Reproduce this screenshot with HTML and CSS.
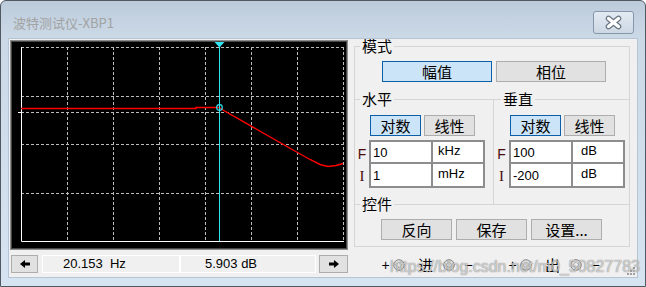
FILE: index.html
```html
<!DOCTYPE html>
<html>
<head>
<meta charset="utf-8">
<link rel="stylesheet" href="styles.css">
</head>
<body>
<div class="window">
  <div class="titlebar">
    <span class="title">波特测试仪-XBP1</span>
    <button class="close">
      <svg width="17" height="15" viewBox="0 0 17 15">
        <path d="M3.5 3.5L13.5 11.5M13.5 3.5L3.5 11.5" stroke="#66717f" stroke-width="5.6" stroke-linecap="round" fill="none"/>
        <path d="M3.5 3.5L13.5 11.5M13.5 3.5L3.5 11.5" stroke="#ffffff" stroke-width="3.4" stroke-linecap="round" fill="none"/>
      </svg>
    </button>
  </div>
  <div class="client">
    <div class="left">
      <div class="screen">
        <svg width="336" height="208" viewBox="11 41 336 208">
          <g stroke="#bcbcbc" stroke-width="1" stroke-dasharray="3 2" fill="none">
            <path d="M67.5 47V241M113.5 47V241M159.5 47V241M205.5 47V241M251.5 47V241M297.5 47V241M343.5 47V241"/>
            <path d="M21 47.5H343M21 96.5H343M21 112.5H343M21 144.5H343M21 193.5H343"/>
          </g>
          <path d="M21.5 47V241.5H344" stroke="#ffffff" stroke-width="1" fill="none"/>
          <path d="M18 112.5H21" stroke="#ffffff" stroke-width="1"/>
          <polyline points="21,108.5 196,108.5 196,107.5 219,107.5 222,109.5 293,150 310,159.5 320,164.5 328,166.5 336,165.5 343,163.5" stroke="#ff0000" stroke-width="1.4" fill="none"/>
          <path d="M219.5 42V241" stroke="#2ee4f0" stroke-width="1"/>
          <polygon points="214.5,42 224.5,42 219.5,47.5" fill="#2ee4f0"/>
          <circle cx="219.5" cy="107.5" r="2.8" stroke="#2ee4f0" stroke-width="1.2" fill="none"/>
        </svg>
      </div>
      <div class="readout">
        <button class="arrow first">
          <svg width="10" height="8" viewBox="0 0 10 8"><polygon points="0,4 5,0 5,2.5 10,2.5 10,5.5 5,5.5 5,8" fill="#000"/></svg>
        </button>
        <div class="rfield f1">20.153&nbsp; Hz</div>
        <div class="rfield f2">5.903 dB</div>
        <button class="arrow last">
          <svg width="10" height="8" viewBox="0 0 10 8"><polygon points="10,4 5,0 5,2.5 0,2.5 0,5.5 5,5.5 5,8" fill="#000"/></svg>
        </button>
      </div>
    </div>
    <div class="right">
      <fieldset class="grp outer">
        <legend>模式</legend>
        <div class="mode-row">
          <button class="btn wide sel">幅值</button>
          <button class="btn wide">相位</button>
        </div>
        <div class="axes">
          <fieldset class="grp sub h">
            <legend>水平</legend>
            <div class="toggle">
              <button class="btn small sel">对数</button>
              <button class="btn small">线性</button>
            </div>
            <div class="params">
              <div class="lbls"><span class="lbl f">F</span><span class="lbl i">I</span></div>
              <div class="cells">
                <span class="val">10</span><span class="unit">kHz</span>
                <span class="val">1</span><span class="unit">mHz</span>
              </div>
            </div>
          </fieldset>
          <fieldset class="grp sub v">
            <legend>垂直</legend>
            <div class="toggle">
              <button class="btn small sel">对数</button>
              <button class="btn small">线性</button>
            </div>
            <div class="params">
              <div class="lbls"><span class="lbl f">F</span><span class="lbl i">I</span></div>
              <div class="cells">
                <span class="val">100</span><span class="unit db">dB</span>
                <span class="val">-200</span><span class="unit db">dB</span>
              </div>
            </div>
          </fieldset>
        </div>
        <fieldset class="grp sub ctl">
          <legend>控件</legend>
          <div class="ctl-row">
            <button class="btn ctlbtn">反向</button>
            <button class="btn ctlbtn">保存</button>
            <button class="btn ctlbtn">设置...</button>
          </div>
        </fieldset>
      </fieldset>
      <div class="terms">
        <div class="term">
          <span class="pm">+</span>
          <svg class="jack a" width="12" height="12" viewBox="0 0 12 12"><circle cx="6" cy="6" r="5.3" fill="#dcdcdc" stroke="#8a8a8a"/><circle cx="6" cy="6" r="2.4" fill="#f6f6f6" stroke="#a8a8a8" stroke-width="0.8"/></svg>
          <span class="tl">进</span>
          <svg class="jack b" width="12" height="12" viewBox="0 0 12 12"><circle cx="6" cy="6" r="5.3" fill="#dcdcdc" stroke="#8a8a8a"/><circle cx="6" cy="6" r="2.4" fill="#f6f6f6" stroke="#a8a8a8" stroke-width="0.8"/></svg>
          <span class="pm end">−</span>
        </div>
        <div class="term second">
          <span class="pm">+</span>
          <svg class="jack a" width="12" height="12" viewBox="0 0 12 12"><circle cx="6" cy="6" r="5.3" fill="#dcdcdc" stroke="#8a8a8a"/><circle cx="6" cy="6" r="2.4" fill="#f6f6f6" stroke="#a8a8a8" stroke-width="0.8"/></svg>
          <span class="tl">出</span>
          <svg class="jack b" width="12" height="12" viewBox="0 0 12 12"><circle cx="6" cy="6" r="5.3" fill="#dcdcdc" stroke="#8a8a8a"/><circle cx="6" cy="6" r="2.4" fill="#f6f6f6" stroke="#a8a8a8" stroke-width="0.8"/></svg>
          <span class="pm end">−</span>
        </div>
      </div>
    </div>
    <svg class="grip" width="10" height="10" viewBox="0 0 10 10">
      <g fill="#a0a0a0"><rect x="7" y="1" width="2" height="2"/><rect x="4" y="4" width="2" height="2"/><rect x="7" y="4" width="2" height="2"/><rect x="1" y="7" width="2" height="2"/><rect x="4" y="7" width="2" height="2"/><rect x="7" y="7" width="2" height="2"/></g>
    </svg>
  </div>
</div>
<div class="watermark">https://blog.csdn.net/m0_50827783</div>
</body>
</html>
```

FILE: styles.css
```css
* { box-sizing: border-box; }
html, body { margin: 0; padding: 0; }
body {
  width: 646px;
  height: 287px;
  overflow: hidden;
  position: relative;
  background: #ffffff;
  font-family: "Noto Sans CJK SC", sans-serif;
}
.window {
  width: 646px;
  height: 287px;
  border: 1px solid #505862;
  border-radius: 6px 6px 0 0;
  background: linear-gradient(#bccbda, #cbd9e7 36px, #d6e3f0);
  display: flex;
  flex-direction: column;
}
.titlebar {
  height: 37px;
  flex: none;
  display: flex;
  justify-content: space-between;
  align-items: flex-start;
  padding: 0 11px 0 12px;
}
.title {
  margin-top: 13px;
  font-size: 13px;
  line-height: 18px;
  color: #a2a2a2;
}
.close {
  margin-top: 10px;
  width: 41px;
  height: 23px;
  padding: 0;
  border: 1px solid #8797ab;
  border-radius: 3px;
  background: linear-gradient(#e3eaf2, #cdd8e4);
  display: flex;
  align-items: center;
  justify-content: center;
}
.close svg { display: block; }
.client {
  position: relative;
  flex: none;
  margin: 0 7px;
  height: 240px;
  border: 1px solid #b6c5d5;
  background: #f0f0f0;
  display: flex;
}
.left {
  width: 341px;
  flex: none;
  padding: 1px 0 0 1px;
  display: flex;
  flex-direction: column;
}
.screen {
  width: 338px;
  height: 210px;
  background: #000;
  border: 1px solid #8c8c8c;
  box-shadow: inset 0 0 0 1px #474747;
}
.screen svg { display: block; }
.readout {
  margin-top: 5px;
  height: 18px;
  display: flex;
}
.arrow {
  height: 18px;
  padding: 0;
  border: 1px solid #adadad;
  background: #e1e1e1;
  display: flex;
  align-items: center;
  justify-content: center;
}
.arrow svg { display: block; }
.arrow.first { width: 27px; margin-left: 1px; }
.arrow.last { width: 29px; margin-left: 3px; }
.rfield {
  height: 18px;
  border: 1px solid #ffffff;
  background: #f0f0f0;
  font-family: "Liberation Sans", Arial, sans-serif;
  font-size: 13px;
  line-height: 16px;
  color: #000;
  white-space: pre;
}
.rfield.f1 { width: 138px; margin-left: 4px; padding-left: 20px; }
.rfield.f2 { width: 136px; padding-left: 24px; }
.right {
  flex: 1;
  padding-left: 4px;
  display: flex;
  flex-direction: column;
}
.grp {
  margin: 0;
  min-width: 0;
  border: 1px solid #d5d5d5;
}
.grp legend {
  font-size: 15px;
  line-height: 14px;
  padding: 0 2px;
  margin-left: 5px;
  color: #000;
}
.outer {
  width: 276px;
  padding: 0 0 6px 0;
}
.mode-row {
  margin: 8px 0 0 27px;
  display: flex;
  gap: 4px;
}
.btn {
  padding: 0;
  border: 1px solid #adadad;
  background: #e1e1e1;
  font-family: "Noto Sans CJK SC", sans-serif;
  font-size: 15px;
  line-height: 19px;
  color: #000;
}
.btn.sel {
  border-color: #0a5fa8;
  background: #cce4f7;
}
.btn.wide { width: 110px; height: 21px; }
.btn.small { width: 51px; height: 21px; }
.axes {
  margin-top: 10px;
  display: flex;
}
.sub {
  border: none;
  border-top: 1px solid #d5d5d5;
  padding: 0;
}
.h {
  width: 139px;
  border-right: 1px solid #d5d5d5;
  padding-bottom: 16px;
}
.v {
  width: 135px;
}
.v legend { margin-left: 7px; }
.toggle {
  margin-top: 9px;
  display: flex;
  gap: 3px;
}
.h .toggle { margin-left: 15px; }
.v .toggle { margin-left: 16px; }
.params {
  margin-top: 4px;
  display: flex;
}
.lbls {
  display: flex;
  flex-direction: column;
  padding-top: 2px;
  gap: 2px;
}
.h .lbls { width: 14px; }
.v .lbls { width: 15px; }
.lbl {
  display: flex;
  align-items: center;
  justify-content: center;
  color: #4a0c0c;
  font-size: 14px;
}
.lbl.f { height: 20px; font-family: "Liberation Sans", Arial, sans-serif; padding-top: 3px; }
.lbl.i { height: 22px; font-family: "Liberation Serif", "Times New Roman", serif; font-size: 15px; padding-top: 3px; }
.cells {
  display: grid;
  grid-template-columns: 60px 50px;
  grid-template-rows: 20px 22px;
  gap: 2px;
  border: 2px solid #8d8d8d;
  background: #8d8d8d;
}
.val, .unit {
  background: #ffffff;
  font-family: "Liberation Sans", Arial, sans-serif;
  font-size: 13px;
  color: #000;
  display: flex;
  align-items: center;
}
.val { padding-left: 2px; }
.unit { padding-left: 5px; padding-bottom: 4px; }
.unit.db { padding-left: 8px; }
.ctl {
  margin-top: -7px;
}
.ctl-row {
  margin: 8px 0 0 26px;
  display: flex;
  gap: 4px;
}
.btn.ctlbtn { width: 71px; height: 21px; }
.terms {
  margin-top: 10px;
  padding-left: 27px;
  display: flex;
  align-items: center;
  height: 16px;
}
.term {
  display: flex;
  align-items: center;
}
.term.second { margin-left: 35px; }
.pm {
  width: 9px;
  text-align: center;
  font-family: "Liberation Sans", Arial, sans-serif;
  font-size: 14px;
  line-height: 16px;
  color: #000;
}
.jack { display: block; }
.jack.a { margin-left: 3px; }
.jack.b { margin-left: 10px; }
.tl {
  margin-left: 13px;
  font-size: 15px;
  line-height: 16px;
  color: #000;
}
.pm.end { margin-left: 9px; }
.grip {
  position: absolute;
  right: 1px;
  bottom: 1px;
}
.watermark {
  position: absolute;
  left: 390px;
  top: 257px;
  font-family: "Liberation Sans", Arial, sans-serif;
  font-size: 16px;
  line-height: 20px;
  color: rgba(255, 255, 255, 0.6);
  text-shadow: 0 0 1px rgba(60, 60, 60, 0.45), 0 0 1px rgba(60, 60, 60, 0.45);
  white-space: nowrap;
}
```
